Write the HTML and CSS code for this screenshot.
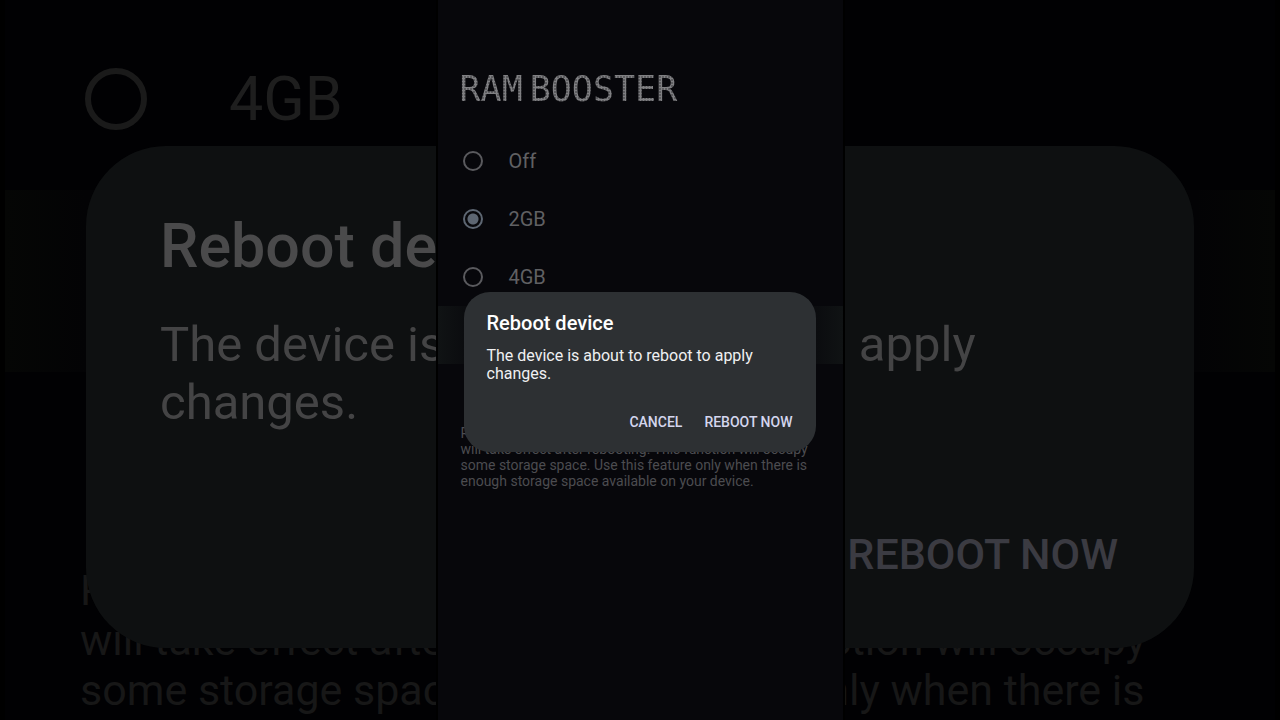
FILE: index.html
```html
<!DOCTYPE html>
<html lang="en">
<head>
    <meta charset="UTF-8">
    <meta name="viewport" content="width=device-width, initial-scale=1.0">
    <title>RAM Booster</title>
    <link rel="stylesheet" href="styles.css">
</head>
<body>
    <div class="stage">
        <!-- enlarged, dimmed copy behind the phone -->
        <div class="screen backdrop" aria-hidden="true" inert>
            <div class="settings">
                <div class="options">
                    <label class="option"><input type="radio" name="back-size"><span>4GB</span></label>
                    <div class="option pressed"></div>
                </div>
                <p class="note">R<br>will take effect after rebooting. This function will occupy some storage space. Use this feature only when there is enough storage space available on your device.</p>
            </div>
            <div class="overlay">
                <div class="dialog">
                    <h2>Reboot device</h2>
                    <p>The device is about to reboot to apply changes.</p>
                    <div class="actions">
                        <button type="button">REBOOT NOW</button>
                    </div>
                </div>
            </div>
        </div>

        <main class="screen phone">
            <div class="settings">
                <h1><span>RAM</span> <span>BOOSTER</span></h1>
                <div class="options">
                    <label class="option"><input type="radio" name="size"><span>Off</span></label>
                    <label class="option"><input type="radio" name="size" checked><span>2GB</span></label>
                    <label class="option"><input type="radio" name="size"><span>4GB</span></label>
                    <div class="option pressed"></div>
                </div>
                <p class="note">R<br>will take effect after rebooting. This function will occupy some storage space. Use this feature only when there is enough storage space available on your device.</p>
            </div>
            <div class="overlay">
                <div class="dialog" role="dialog" aria-labelledby="dialogTitle">
                    <h2 id="dialogTitle">Reboot device</h2>
                    <p>The device is about to reboot to apply changes.</p>
                    <div class="actions">
                        <button type="button">CANCEL</button>
                        <button type="button">REBOOT NOW</button>
                    </div>
                </div>
            </div>
        </main>
    </div>
</body>
</html>
```
FILE: styles.css
```css
* {
    box-sizing: border-box;
}
body {
    margin: 0;
    background-color: #000;
    font-family: Roboto, "Liberation Sans", sans-serif;
}
h1, h2, p {
    margin: 0;
}
.stage {
    display: grid;
    height: 100vh;
    justify-items: center;
    overflow: hidden;
}
.stage > .screen {
    grid-area: 1 / 1;
}
.screen {
    display: grid;
    grid-template-columns: minmax(0, 1fr);
    grid-template-rows: minmax(0, 1fr);
    height: 100vh;
    overflow: hidden;
}
.settings, .overlay {
    grid-area: 1 / 1;
}
.overlay {
    display: flex;
    align-items: center;
}
.dialog {
    flex: 1;
}
.option {
    display: flex;
    align-items: center;
}
.option input {
    appearance: none;
    flex: none;
    margin: 0;
    border-radius: 50%;
}
.dialog h2 {
    font-weight: 500;
}
.actions {
    display: flex;
    justify-content: flex-end;
}
.actions button {
    padding: 0;
    border: none;
    background: none;
    font-family: inherit;
    font-weight: 500;
    cursor: pointer;
}

/* phone */
.phone {
    aspect-ratio: 9 / 16;
    box-sizing: content-box;
    border: solid #000;
    border-width: 0 2px;
    background-color: #07070b;
    color: #606063;
}
.phone .settings {
    padding-top: 65px;
}
/* dotted lettering: the text clips a grid of dots */
.phone h1 {
    display: flex;
    gap: 7px;
    margin-bottom: 19px;
    padding-left: 22px;
    font: 35px/48px "DejaVu Sans Mono", monospace;
    color: transparent;
    background: radial-gradient(circle, #808083 1px, #2c2c2f 2px) 0 0 / 3px 3px;
    background-clip: text;
    -webkit-background-clip: text;
}
.phone .option {
    height: 58px;
    padding-left: 25px;
    gap: 26px;
    font-size: 20px;
}
.phone .option input {
    width: 20px;
    height: 20px;
    border: 2px solid #5a5a5e;
}
.phone .option input:checked {
    border-color: #5d6672;
    background: radial-gradient(circle, #5d6672 5px, transparent 6px);
}
.phone .pressed {
    background: linear-gradient(to right, #101314, #0b0c0f 26px, #0b0c0f calc(100% - 26px), #101314);
}
.phone .note {
    margin-top: 61px;
    padding: 0 23px;
    font-size: 14px;
    line-height: 16px;
    color: #4c4c50;
}
.phone .overlay {
    padding: 24px 27px 0 26px;
}
.phone .dialog {
    padding: 19px 23px 20px;
    border-radius: 26px;
    background-color: #2d3033;
    color: #f0f0f2;
}
.phone .dialog h2 {
    font-size: 20px;
    line-height: 24px;
    color: #fff;
}
.phone .dialog p {
    margin-top: 12px;
    font-size: 16px;
    line-height: 18px;
}
.phone .actions {
    gap: 22px;
    margin-top: 29px;
}
.phone .actions button {
    font-size: 14px;
    line-height: 20px;
    color: #d4d6ee;
}

/* backdrop */
.backdrop {
    width: 100%;
    border: solid #000;
    border-width: 0 5px;
    background-color: #010103;
    color: #1e1e1e;
}
.backdrop .settings {
    padding-top: 8px;
}
.backdrop .option {
    height: 182px;
    padding-left: 80px;
    gap: 82px;
    font-size: 61px;
}
.backdrop .option input {
    width: 62px;
    height: 62px;
    border: 6px solid #1a1a1a;
}
.backdrop .pressed {
    background: linear-gradient(to right, #050605, #030305 80px, #030305 calc(100% - 80px), #050605);
}
.backdrop .note {
    margin-top: 193px;
    padding: 0 75px;
    font-size: 43px;
    line-height: 50px;
    color: #171717;
}
.backdrop .overlay {
    padding: 74px 81px 0;
}
.backdrop .dialog {
    padding: 62px 76px 64px 74px;
    border-radius: 80px;
    background-color: #0e1011;
    color: #444445;
}
.backdrop .dialog h2 {
    font-size: 61px;
    line-height: 76px;
    color: #4a4a4b;
}
.backdrop .dialog p {
    margin-top: 32px;
    font-size: 49px;
    line-height: 58px;
}
.backdrop .actions {
    margin-top: 92px;
}
.backdrop .actions button {
    font-size: 43px;
    line-height: 60px;
    color: #3b3b42;
}
```
